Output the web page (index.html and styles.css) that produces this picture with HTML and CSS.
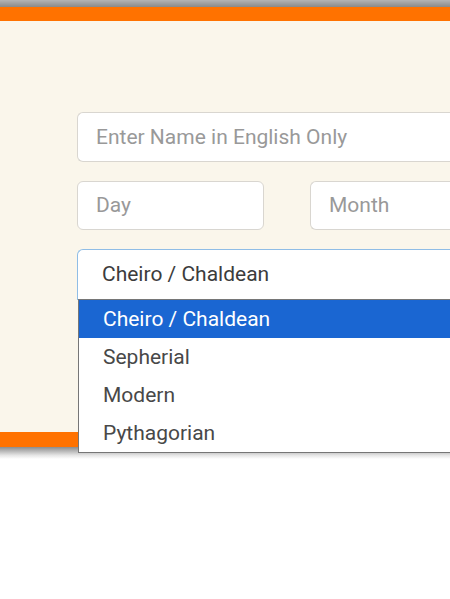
FILE: index.html
```html
<!DOCTYPE html>
<html>
<head>
<meta charset="utf-8">
<link rel="stylesheet" href="styles.css">
</head>
<body>
<div class="top-shade"></div>
<div class="orange-bar"></div>
<section class="panel">
  <form class="form">
    <div class="field name-field">Enter Name in English Only</div>
    <div class="row">
      <div class="field day-field">Day</div>
      <div class="field month-field">Month</div>
    </div>
    <div class="select-wrap">
      <div class="select">Cheiro / Chaldean</div>
      <ul class="menu">
        <li class="option selected">Cheiro / Chaldean</li>
        <li class="option">Sepherial</li>
        <li class="option">Modern</li>
        <li class="option">Pythagorian</li>
      </ul>
    </div>
  </form>
</section>
<div class="orange-bar bottom"></div>
<div class="bottom-shade"></div>
</body>
</html>
```
FILE: styles.css
```css
html, body {
  margin: 0;
  padding: 0;
  overflow: hidden;
  background: #ffffff;
  font-family: Roboto, "Liberation Sans", sans-serif;
}
.top-shade {
  height: 7px;
  background: linear-gradient(#b4b4b4, #8a8a8a);
}
.orange-bar {
  height: 14px;
  background: #ff7200;
}
.orange-bar.bottom {
  height: 15px;
}
.bottom-shade {
  height: 12px;
  background: linear-gradient(#8c8c8c, #e6e6e6 70%, #ffffff);
}
.panel {
  background: #faf6eb;
  height: 320px;
  padding-top: 91px;
}
.form {
  margin-left: 77px;
  width: 374px;
  display: flex;
  flex-direction: column;
  gap: 19px;
}
.field {
  box-sizing: border-box;
  height: 50px;
  border: 1px solid #d9d6d0;
  border-right: none;
  border-radius: 6px 0 0 6px;
  background: #ffffff;
  color: #999999;
  font-size: 21px;
  line-height: 48px;
  padding-left: 18px;
  white-space: nowrap;
  overflow: hidden;
}
.row {
  display: flex;
  gap: 46px;
}
.day-field {
  width: 187px;
  height: 49px;
  line-height: 47px;
  border-right: 1px solid #d9d6d0;
  border-radius: 6px;
}
.month-field {
  flex: 1;
  height: 49px;
  line-height: 47px;
}
.select-wrap {
  position: relative;
}
.select {
  box-sizing: border-box;
  height: 51px;
  border: 1px solid #8fbde6;
  border-right: none;
  border-radius: 6px 0 0 0;
  background: #ffffff;
  color: #3c3c3c;
  font-size: 21px;
  line-height: 49px;
  padding-left: 24px;
}
.menu {
  position: absolute;
  left: 1px;
  top: 50px;
  box-sizing: border-box;
  width: 373px;
  margin: 0;
  padding: 0;
  list-style: none;
  background: #ffffff;
  border: 1px solid #767676;
  border-right: none;
}
.option {
  height: 38px;
  line-height: 38px;
  padding-left: 24px;
  font-size: 21px;
  color: #484848;
}
.option.selected {
  background: #1a66d2;
  color: #ffffff;
}
```
